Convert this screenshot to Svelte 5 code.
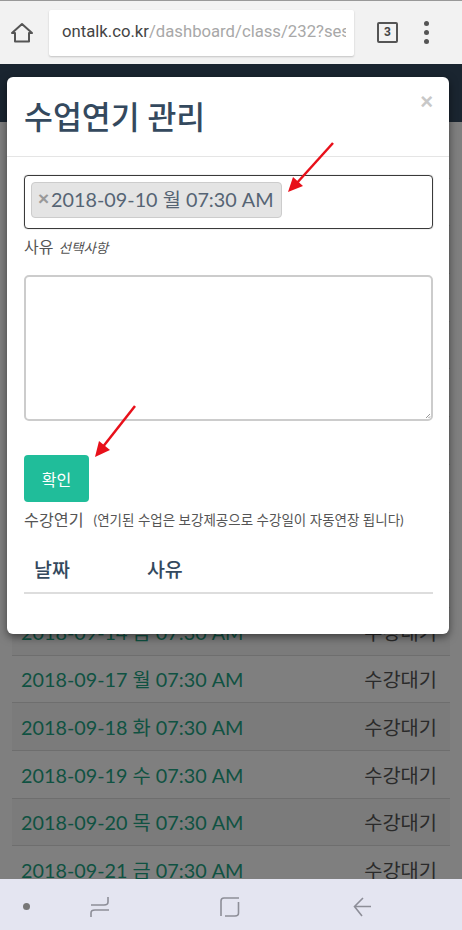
<script>
  const days = [
    ['2018-08-31 금', 1], ['2018-09-03 월', 0], ['2018-09-04 화', 1], ['2018-09-05 수', 0],
    ['2018-09-06 목', 1], ['2018-09-07 금', 0], ['2018-09-10 월', 1], ['2018-09-11 화', 0],
    ['2018-09-12 수', 1], ['2018-09-13 목', 0], ['2018-09-14 금', 1], ['2018-09-17 월', 0],
    ['2018-09-18 화', 1], ['2018-09-19 수', 0], ['2018-09-20 목', 1], ['2018-09-21 금', 0]
  ];
</script>

<div class="phone">
  <header class="chrome">
    <svg class="home" viewBox="0 0 24 24" width="24" height="24" fill="none" stroke="#555" stroke-width="2">
      <path d="M2 12 12 3l10 9h-3v8.500H5V12z" stroke-linejoin="round" />
    </svg>
    <div class="url">
      <div class="addr"><span class="host">ontalk.co.kr</span><span class="path">/dashboard/class/232?session=1</span></div>
    </div>
    <div class="tabs">3</div>
    <div class="dots"><i></i><i></i><i></i></div>
  </header>

  <main class="page">
    <div class="topbar"></div>
    <ul class="rows">
      {#each days as [day, shade]}
        <li class:shade>
          <span class="when">{day} 07:30 AM</span>
          <span class="state">수강대기</span>
        </li>
      {/each}
    </ul>

    <div class="backdrop"></div>

    <section class="modal">
      <div class="modal-head">
        <h2>수업연기 관리</h2>
        <span class="close">×</span>
      </div>
      <div class="modal-body">
        <div class="select">
          <span class="chip"><b>×</b>2018-09-10 월 07:30 AM</span>
        </div>
        <p class="label">사유 <em>선택사항</em></p>
        <div class="textarea">
          <svg class="grip" viewBox="0 0 8 8" width="8" height="8" stroke="#999" stroke-width="1">
            <path d="M7 3 3 7M7 5.500 5.500 7" />
          </svg>
        </div>
        <button>확인</button>
        <p class="note"><span>수강연기</span><small>(연기된 수업은 보강제공으로 수강일이 자동연장 됩니다)</small></p>
        <div class="thead"><span>날짜</span><span>사유</span></div>
      </div>
    </section>

    <svg class="arrows" viewBox="0 0 462 866" width="462" height="866">
      <g stroke="#e8101a" stroke-width="2.500" fill="#e8101a">
        <path d="M333 79 296 120" fill="none" />
        <path d="M288 128 293 113 303 122z" stroke="none" />
        <path d="M135 342 102 384" fill="none" />
        <path d="M95 393 99 377 110 386z" stroke="none" />
      </g>
    </svg>
  </main>

  <nav class="softkeys">
    <i class="dot"></i>
    <svg viewBox="0 0 20 22" width="20" height="22" fill="none" stroke="#8d8e98" stroke-width="1.600">
      <path d="M1 9h13q4 0 4-3V1M19 14H5q-4 0-4 3v4" />
    </svg>
    <svg viewBox="0 0 20 22" width="20" height="22" fill="none" stroke="#8d8e98" stroke-width="1.600">
      <path d="M19 2H4Q1 2 1 5v15M5 20h10q3.500 0 3.500-3V6" />
    </svg>
    <svg viewBox="0 0 20 22" width="20" height="22" fill="none" stroke="#8d8e98" stroke-width="1.600">
      <path d="M19 10.500H3M11 2 2.500 10.500 10 20" />
    </svg>
  </nav>
</div>

<style>
  :global(body) {
    margin: 0;
    background: #7f7f7f;
  }

  .phone {
    width: 462px;
    height: 930px;
    display: flex;
    flex-direction: column;
    overflow: hidden;
    font-family: Lato, "Noto Sans CJK KR", sans-serif;
  }

  .chrome {
    height: 64px;
    flex: none;
    box-sizing: border-box;
    border-top: 1px solid #999;
    background: #f2f2f2;
    display: flex;
    align-items: center;
    padding: 0 16px 0 10px;
  }

  .home {
    flex: none;
  }

  .url {
    width: 305px;
    height: 46px;
    margin-left: 15px;
    padding: 0 8px 0 13px;
    box-sizing: border-box;
    background: #fff;
    border-radius: 2px;
    box-shadow: 0 1px 2px rgba(0, 0, 0, 0.2);
    font: 16.700px/44px Roboto, sans-serif;
  }

  .addr {
    white-space: nowrap;
    overflow: hidden;
  }

  .host {
    color: #444;
  }

  .path {
    color: #a8a8a8;
  }

  .tabs {
    width: 21px;
    height: 21px;
    margin-left: 23px;
    box-sizing: border-box;
    border: 2px solid #555;
    border-radius: 2px;
    color: #444;
    font: bold 12px/17px Roboto, sans-serif;
    text-align: center;
  }

  .dots {
    margin-left: 26px;
    display: flex;
    flex-direction: column;
    gap: 4px;
  }

  .dots i {
    width: 5px;
    height: 5px;
    border-radius: 50%;
    background: #555;
  }

  .page {
    position: relative;
    flex: 1;
    overflow: hidden;
    background: #fff;
  }

  .topbar {
    position: relative;
    z-index: 1;
    height: 58px;
    background: #1a2530;
  }

  .rows {
    list-style: none;
    margin: 0;
    padding: 9px 12px 0;
    font-size: 19.800px;
  }

  .rows li {
    height: 47.700px;
    box-sizing: border-box;
    border-bottom: 1px solid #ddd;
    display: flex;
    justify-content: space-between;
    align-items: center;
    padding: 0 13px 0 9px;
    color: #555;
  }

  .rows li.shade {
    background: #f6f6f6;
  }

  .when {
    color: #1fa584;
  }

  .backdrop {
    position: absolute;
    left: 0;
    right: 0;
    top: 58px;
    bottom: 0;
    background: rgba(0, 0, 0, 0.5);
  }

  .modal {
    position: absolute;
    z-index: 2;
    left: 7px;
    top: 13px;
    width: 442px;
    height: 557px;
    background: #fff;
    border-radius: 6px;
    box-shadow: 0 3px 9px rgba(0, 0, 0, 0.5);
    color: #34495e;
  }

  .modal-head {
    height: 80px;
    box-sizing: border-box;
    border-bottom: 1px solid #e5e5e5;
    padding: 0 17px;
    display: flex;
    justify-content: space-between;
  }

  h2 {
    margin: 0;
    font-size: 31.400px;
    font-weight: 500;
    line-height: 80px;
  }

  .close {
    color: #c8c8c8;
    font: bold 22px/50px "Liberation Sans", sans-serif;
    margin-right: -1px;
  }

  .modal-body {
    padding: 18px 16px 0 17px;
  }

  .select {
    height: 54px;
    box-sizing: border-box;
    border: 1px solid #3a3a3a;
    box-shadow: 0 0 1px rgba(0, 0, 0, 0.5);
    border-radius: 4px;
    padding: 6px;
  }

  .chip {
    display: inline-flex;
    align-items: center;
    height: 36px;
    width: 251px;
    box-sizing: border-box;
    padding: 0 0 3px 6px;
    background: #e4e4e4;
    border: 1px solid #ccc;
    border-radius: 4px;
    font-size: 19.800px;
    white-space: nowrap;
    color: #566474;
  }

  .chip b {
    color: #999;
    font: bold 19px "Liberation Sans", sans-serif;
    margin-right: 2px;
  }

  .label {
    margin: 8px 0 0;
    height: 38px;
    font-size: 16px;
    line-height: 20px;
    color: #555;
  }

  .label em {
    font-size: 13.500px;
    margin-left: 1px;
  }

  .textarea {
    position: relative;
    height: 146px;
    box-sizing: border-box;
    border: 2px solid #ccc;
    border-radius: 5px;
  }

  .grip {
    position: absolute;
    right: 0;
    bottom: 0;
  }

  button {
    display: block;
    width: 65px;
    height: 47px;
    margin-top: 34px;
    border: 0;
    border-radius: 4px;
    background: #20bd9a;
    color: #fff;
    font: 16px "Noto Sans CJK KR", sans-serif;
  }

  .note {
    margin: 8px 0 0;
    color: #555;
    font-size: 16.200px;
    line-height: 20px;
    display: flex;
    align-items: center;
    gap: 10px;
    white-space: nowrap;
  }

  .note small {
    font-size: 13.500px;
  }

  .thead {
    margin-top: 18px;
    height: 46px;
    box-sizing: border-box;
    border-bottom: 2px solid #ddd;
    padding-left: 10px;
    display: flex;
    gap: 77px;
    font-size: 19.500px;
    font-weight: 500;
    line-height: 44px;
  }

  .arrows {
    position: absolute;
    z-index: 3;
    left: 0;
    top: 0;
    pointer-events: none;
  }

  .softkeys {
    height: 51px;
    flex: none;
    box-sizing: border-box;
    position: relative;
    z-index: 4;
    padding-top: 4px;
    background: #e4e5f1;
    display: grid;
    grid-template-columns: 52px 96px 164px 99px;
    justify-items: center;
    align-items: center;
  }

  .dot {
    width: 7px;
    height: 7px;
    border-radius: 50%;
    background: #777;
  }
</style>
